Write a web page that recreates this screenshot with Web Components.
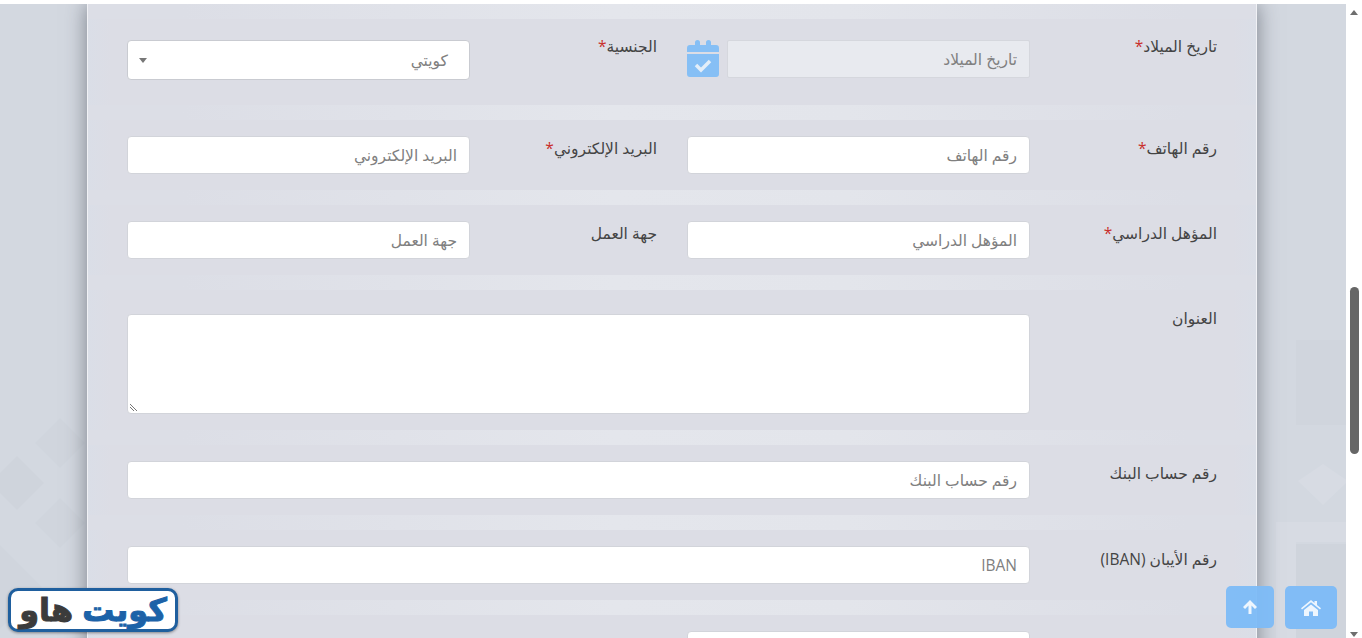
<!DOCTYPE html>
<html lang="ar">
<head>
<meta charset="utf-8">
<title>نموذج التسجيل</title>
<style>
  html, body { margin: 0; height: 100%; overflow: hidden; background: #fff; }
  body { font-family: "Open Sans", "Noto Sans", "DejaVu Sans", sans-serif; font-size: 15.5px; color: #444; }
</style>
</head>
<body>
<template id="tpl-page">
  <style>
    :host { display: grid; grid-template-columns: 1fr 16px; height: 638px; overflow: hidden; position: relative; }
    .view { position: relative; overflow: hidden; margin-top: 4px; background: #d3d8e0; }
    .pattern { position: absolute; inset: 0; width: 100%; height: 100%; }
    .card { position: relative; margin-left: 87px; width: 1170px; }
  </style>
  <div class="view">
    <svg class="pattern" viewBox="0 4 1346 634" preserveAspectRatio="none">
      <g fill="#cfd4dc">
        <path d="M17 456l27 27-27 27-27-27z"/>
        <path d="M60 418l25 25-25 25-25-25z" fill="#d0d5dd"/>
        <path d="M60 498l25 25-25 25-25-25z" fill="#d0d5dd"/>
        <path d="M0 545l42 42-42 42z" fill="#d0d5dd"/>
        <rect x="1296" y="340" width="50" height="85" fill="#d0d5dd"/>
        <rect x="1296" y="544" width="50" height="94"/>
      </g>
      <g fill="#d7dbe3">
        <path d="M1323 464l25 17-25 24-25-24z"/>
        <rect x="1276" y="522" width="70" height="20"/>
        <rect x="1276" y="522" width="20" height="116"/>
      </g>
    </svg>
    <div class="card"><slot></slot></div>
  </div>
  <slot name="scrollbar"></slot>
  <slot name="fixed"></slot>
</template>

<template id="tpl-card">
  <style>
    :host {
      display: block; box-sizing: border-box; height: 700px; direction: rtl;
      background: #dbdfe8; border-left: 1px solid #f0f1f5; border-right: 1px solid #f0f1f5;
      box-shadow: 0 0 20px rgba(50, 55, 65, .55);
    }
  </style>
  <slot></slot>
</template>

<template id="tpl-row">
  <style>
    :host {
      display: flex; gap: 30px; box-sizing: border-box; padding: calc(15px + var(--pad, 16px)) 39px 0;
      height: var(--h, 85px);
      background:
        linear-gradient(90deg, #dcdee6 8%, #e4e6ec 45%, #e3e5eb 65%, #dcdee6 94%) top / 100% 15px no-repeat,
        linear-gradient(90deg, #dadee7, #dcdde5 2%, #dcdde5 98%, #dadee7);
    }
  </style>
  <slot></slot>
</template>

<template id="tpl-field">
  <style>
    :host { display: grid; grid-template-columns: 187px 343px; align-items: start; }
    :host([wide]) { grid-template-columns: 187px 903px; }
    .label { line-height: 24px; color: #444; font-size: 15.5px; padding-top: var(--label, 0); }
    .label ::slotted([slot="star"]) { color: #c9302c; }
    .control { display: flex; gap: 8px; margin-top: var(--inset, 0); }
  </style>
  <div class="label"><slot name="label"></slot><slot name="star"></slot></div>
  <div class="control"><slot></slot></div>
</template>

<template id="tpl-input">
  <style>
    :host {
      display: block; flex: 1; box-sizing: border-box; height: 38px; padding: 0 12px; line-height: 37px;
      font-size: 15.5px; color: #808080; background: #fff; border: 1px solid #d2d4da; border-radius: 4px;
      white-space: nowrap; overflow: hidden;
    }
    :host([disabled]) { background: #e8eaef; border-color: #d5d7dd; border-radius: 2px; }
    :host([area]) { height: 100px; position: relative; }
    .grip { position: absolute; left: 1px; bottom: 1px; width: 9px; height: 9px; display: none; }
    :host([area]) .grip { display: block; }
  </style>
  <slot></slot>
  <svg class="grip" viewBox="0 0 9 9"><path d="M1 1l7 7M1 4l4 4" stroke="#777" fill="none"/></svg>
</template>

<template id="tpl-select">
  <style>
    :host {
      display: flex; flex: 1; align-items: center; justify-content: space-between; box-sizing: border-box;
      height: 40px; padding: 0 21px 0 11px; font-size: 15.5px; color: #808080; background: #fff;
      border: 1px solid #c9cbd1; border-radius: 4px;
    }
    i { width: 0; height: 0; border: 4px solid transparent; border-top: 5px solid #777; border-bottom: 0; }
  </style>
  <slot></slot><i></i>
</template>

<template id="tpl-calendar">
  <style>
    :host { display: block; width: 32px; height: 38px; flex: none; }
    svg { display: block; }
  </style>
  <svg width="32" height="38" viewBox="0 0 32 38">
    <path fill="#86bff5" d="M3 5h5V2.500a2.500 2.500 0 0 1 5 0V5h6V2.500a2.500 2.500 0 0 1 5 0V5h5a3 3 0 0 1 3 3v4H0V8a3 3 0 0 1 3-3zM0 14h32v20a3 3 0 0 1-3 3H3a3 3 0 0 1-3-3z"/>
    <path fill="none" stroke="#e3eef9" stroke-width="3.500" d="M9 25l5 5 9-9"/>
  </svg>
</template>

<template id="tpl-scrollbar">
  <style>
    :host { display: flex; flex-direction: column; align-items: center; background: #fff; height: 638px; box-sizing: border-box; padding-top: 10px; }
    .up, .down { width: 0; height: 0; border: 4px solid transparent; }
    .up { border-top: 0; border-bottom: 5px solid #6e6e6e; }
    .down { border-bottom: 0; border-top: 5px solid #6e6e6e; margin-top: 178px; }
    .thumb { width: 9px; height: 167px; background: #666; border-radius: 5px; margin-top: 272px; }
  </style>
  <div class="up"></div>
  <div class="thumb"></div>
  <div class="down"></div>
</template>

<template id="tpl-float">
  <style>
    :host {
      position: absolute; top: 586px; display: flex; align-items: center; justify-content: center; height: 42px;
      background: rgba(124, 187, 247, .95); border-radius: 5px;
    }
    :host([kind="up"]) { left: 1226px; width: 48px; }
    :host([kind="home"]) { left: 1285px; width: 52px; height: 43px; }
  </style>
  <slot></slot>
</template>

<template id="tpl-logo">
  <style>
    :host {
      position: absolute; left: 8px; top: 588px; width: 170px; height: 44px; box-sizing: border-box;
      display: flex; align-items: center; justify-content: center; gap: 9px; direction: rtl;
      background: #fff; border: 3px solid #1f5f9e; border-radius: 10px; box-shadow: 0 1px 3px rgba(0,0,0,.4);
      font-family: "DejaVu Sans", sans-serif; font-weight: 700; font-size: 32px; line-height: 36px;
      white-space: nowrap; -webkit-text-stroke: 1px currentColor;
    }
    b { color: #1c62a8; }
    span { color: #3b3b3b; }
  </style>
  <b>كويت</b><span>هاو</span>
</template>

<kw-page>
  <kw-card>
    <kw-row style="--pad:15px;--h:101px;--inset:6px">
      <kw-field>
        <span slot="label">تاريخ الميلاد</span><span slot="star">*</span>
        <kw-input disabled>تاريخ الميلاد</kw-input><kw-calendar></kw-calendar>
      </kw-field>
      <kw-field>
        <span slot="label">الجنسية</span><span slot="star">*</span>
        <kw-select>كويتي</kw-select>
      </kw-field>
    </kw-row>
    <kw-row>
      <kw-field>
        <span slot="label">رقم الهاتف</span><span slot="star">*</span>
        <kw-input>رقم الهاتف</kw-input>
      </kw-field>
      <kw-field>
        <span slot="label">البريد الإلكتروني</span><span slot="star">*</span>
        <kw-input>البريد الإلكتروني</kw-input>
      </kw-field>
    </kw-row>
    <kw-row>
      <kw-field>
        <span slot="label">المؤهل الدراسي</span><span slot="star">*</span>
        <kw-input>المؤهل الدراسي</kw-input>
      </kw-field>
      <kw-field>
        <span slot="label">جهة العمل</span>
        <kw-input>جهة العمل</kw-input>
      </kw-field>
    </kw-row>
    <kw-row style="--pad:16px;--h:155px;--inset:8px">
      <kw-field wide>
        <span slot="label">العنوان</span>
        <kw-input area></kw-input>
      </kw-field>
    </kw-row>
    <kw-row>
      <kw-field wide>
        <span slot="label">رقم حساب البنك</span>
        <kw-input>رقم حساب البنك</kw-input>
      </kw-field>
    </kw-row>
    <kw-row>
      <kw-field wide style="--label:1px">
        <span slot="label">رقم الأيبان (IBAN)</span>
        <kw-input>IBAN</kw-input>
      </kw-field>
    </kw-row>
    <kw-row>
      <kw-field>
        <span slot="label"></span>
        <kw-input></kw-input>
      </kw-field>
    </kw-row>
  </kw-card>
  <kw-scrollbar slot="scrollbar"></kw-scrollbar>
  <kw-logo slot="fixed"></kw-logo>
  <kw-float slot="fixed" kind="up">
    <svg width="16" height="16" viewBox="0 0 16 16" fill="#eef6fe" style="display:block"><path d="M8 1l7 7-2 2-3.500-3.500V15h-3V6.500L3 10 1 8z"/></svg>
  </kw-float>
  <kw-float slot="fixed" kind="home">
    <svg width="20" height="16" viewBox="0 0 20 16" fill="#eef6fe" style="display:block"><path d="M10 0l3.500 2.900V1h2.500v4l4 3.300-1 1.200L10 2.300 1 9.500 0 8.300zM3 10l7-5.600 7 5.600v6h-5v-4.500H8V16H3z"/></svg>
  </kw-float>
</kw-page>

<script>
  // every element just clones its own template into an open shadow root
  const names = ['page', 'card', 'row', 'field', 'input', 'select', 'calendar', 'scrollbar', 'float', 'logo'];
  for (const name of names) {
    customElements.define('kw-' + name, class extends HTMLElement {
      constructor() {
        super();
        this.attachShadow({ mode: 'open' });
        this.shadowRoot.appendChild(document.getElementById('tpl-' + name).content.cloneNode(true));
      }
    });
  }
</script>
</body>
</html>
